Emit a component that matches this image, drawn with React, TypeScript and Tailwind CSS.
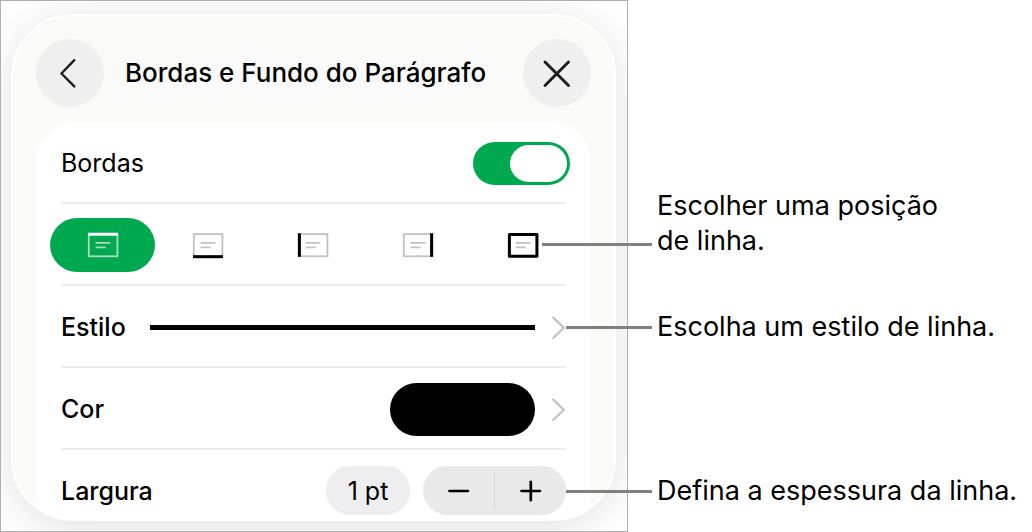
import { useState } from "react";

type Side = "top" | "bottom" | "left" | "right" | "all";

const SIDES: { id: Side; label: string }[] = [
  { id: "top", label: "Superior" },
  { id: "bottom", label: "Inferior" },
  { id: "left", label: "Esquerda" },
  { id: "right", label: "Direita" },
  { id: "all", label: "Todas" },
];

const EDGES: Record<Side, string> = {
  top: "M2 3.2H32",
  bottom: "M2 25.7H32",
  left: "M3.4 2.2V25.8",
  right: "M30.6 2.2V25.8",
  all: "M3.4 3.4H30.9V25.2H3.4Z",
};

function BorderIcon({ side, active }: { side: Side; active: boolean }) {
  const soft = active ? "#a6dcbf" : "#c2c2c2";
  const strong = active ? "#ffffff" : "#000000";
  return (
    <svg width="34" height="28" viewBox="0 0 34 28" fill="none" aria-hidden="true">
      <rect x="2.8" y="3.1" width="28.6" height="22.2" stroke={soft} strokeWidth="1.8" />
      <path d="M10.3 11.8H23.8M10.3 16.4H19" stroke={soft} strokeWidth="1.7" strokeLinecap="round" />
      <path d={EDGES[side]} stroke={strong} strokeWidth="3" strokeLinejoin="round" />
    </svg>
  );
}

function Disclosure() {
  return (
    <svg width="14" height="24" viewBox="0 0 14 24" fill="none" aria-hidden="true">
      <path d="M1.2 2.6L11.8 12.9L1.2 23" stroke="#c2c2c2" strokeWidth="2.2" strokeLinecap="round" strokeLinejoin="round" />
    </svg>
  );
}

const ROW = "flex h-[82px] w-full items-center text-left shadow-[inset_0_-2px_0_#ececec]";

function Callout({ children, leader, className }: { children: React.ReactNode; leader: string; className: string }) {
  return (
    <p className={`relative text-[27px] leading-[35px] ${className}`}>
      <span className={`absolute right-full mr-[5px] h-[3px] bg-[#808080] ${leader}`} />
      {children}
    </p>
  );
}

export default function App() {
  const [on, setOn] = useState(true);
  const [side, setSide] = useState<Side>("top");
  const [width, setWidth] = useState(1);

  return (
    <main className="flex items-start bg-white font-['Inter','Liberation_Sans',sans-serif] text-black">
      <div className="min-w-0 flex-1 overflow-hidden border border-[#b0b0b0] pt-[13px] pr-[11px] pb-[10px] pl-[10px]">
        <section className="overflow-hidden rounded-[62px] border-2 border-white bg-[#fafaf8] px-[23px] shadow-[0_6px_44px_rgba(0,0,0,0.12)]">
          <header className="flex items-center gap-[21px] pt-[23px] pb-[15px]">
            <button type="button" aria-label="Voltar" className="flex size-[68px] shrink-0 items-center justify-center rounded-full bg-[#efefef]">
              <svg width="30" height="32" viewBox="0 0 30 32" fill="none">
                <path d="M19.3 3.2L6.4 16.5L19.3 29.4" stroke="#1c1c1e" strokeWidth="2.4" strokeLinecap="round" strokeLinejoin="round" />
              </svg>
            </button>
            <h1 className="flex-1 text-[26px] leading-[34px] font-medium whitespace-nowrap">Bordas e Fundo do Parágrafo</h1>
            <button type="button" aria-label="Fechar" className="flex size-[68px] shrink-0 items-center justify-center rounded-full bg-[#efefef]">
              <svg width="30" height="30" viewBox="0 0 30 30" fill="none">
                <path d="M3 4L26.5 27.5M26.5 4L3 27.5" stroke="#1c1c1e" strokeWidth="2.9" strokeLinecap="round" />
              </svg>
            </button>
          </header>

          <div className="rounded-t-[40px] bg-white px-[25px] text-[25px] leading-[34px]">
            <div className={ROW}>
              <label htmlFor="bordas" className="flex-1">Bordas</label>
              <input
                id="bordas"
                type="checkbox"
                role="switch"
                checked={on}
                onChange={(e) => setOn(e.target.checked)}
                className="-mr-1 flex h-[43px] w-[97px] appearance-none items-center rounded-full bg-[#d5d5d5] px-[3px] before:h-[37px] before:w-[57px] before:rounded-full before:bg-white checked:justify-end checked:bg-[#00a84f]"
              />
            </div>

            <div className={ROW}>
              <div role="radiogroup" aria-label="Posição da borda" className="-mr-[10px] -ml-[11px] grid flex-1 grid-cols-5">
                {SIDES.map((s) => (
                  <label
                    key={s.id}
                    aria-label={s.label}
                    className="flex h-[54px] items-center justify-center rounded-full has-checked:bg-[#00a84f]"
                  >
                    <input type="radio" name="side" className="sr-only" checked={side === s.id} onChange={() => setSide(s.id)} />
                    <BorderIcon side={s.id} active={side === s.id} />
                  </label>
                ))}
              </div>
            </div>

            <button type="button" className={ROW}>
              <span className="font-medium">Estilo</span>
              <span className="mr-[17px] ml-6 h-[5px] flex-1 bg-black" />
              <Disclosure />
            </button>

            <button type="button" className={ROW}>
              <span className="flex-1 font-medium">Cor</span>
              <span className="mr-[17px] h-[53px] w-[145px] rounded-full bg-black" />
              <Disclosure />
            </button>

            <div className="flex items-center pt-4 pb-1">
              <label htmlFor="largura" className="flex-1 font-medium">Largura</label>
              <input
                id="largura"
                readOnly
                value={`${width} pt`}
                className="mr-[13px] h-[49px] w-[84px] rounded-full bg-[#eeeef0] text-center"
              />
              <div className="flex h-[49px] w-[143px] items-center rounded-full bg-[#e9e9e9]">
                <button type="button" aria-label="Diminuir" onClick={() => setWidth(Math.max(0, width - 1))} className="flex h-full flex-1 items-center justify-center">
                  <svg width="24" height="24" viewBox="0 0 24 24"><path d="M2.5 12H21" stroke="#000" strokeWidth="2.7" strokeLinecap="round" /></svg>
                </button>
                <span className="h-9 w-px bg-[#d4d4d4]" />
                <button type="button" aria-label="Aumentar" onClick={() => setWidth(width + 1)} className="flex h-full flex-1 items-center justify-center">
                  <svg width="24" height="24" viewBox="0 0 24 24"><path d="M2.5 12H21M11.8 2.8V21.2" stroke="#000" strokeWidth="2.7" strokeLinecap="round" /></svg>
                </button>
              </div>
            </div>
          </div>
        </section>
      </div>

      <aside className="w-[404px] shrink-0 pt-[188px] pl-[29px]">
        <Callout leader="w-[110px] top-[55px]" className="mb-[51px]">
          Escolher uma posição
          <br />
          de linha.
        </Callout>
        <Callout leader="w-[86px] top-[17px]" className="mb-[129px]">Escolha um estilo de linha.</Callout>
        <Callout leader="w-[86px] top-[17px]" className="">Defina a espessura da linha.</Callout>
      </aside>
    </main>
  );
}
